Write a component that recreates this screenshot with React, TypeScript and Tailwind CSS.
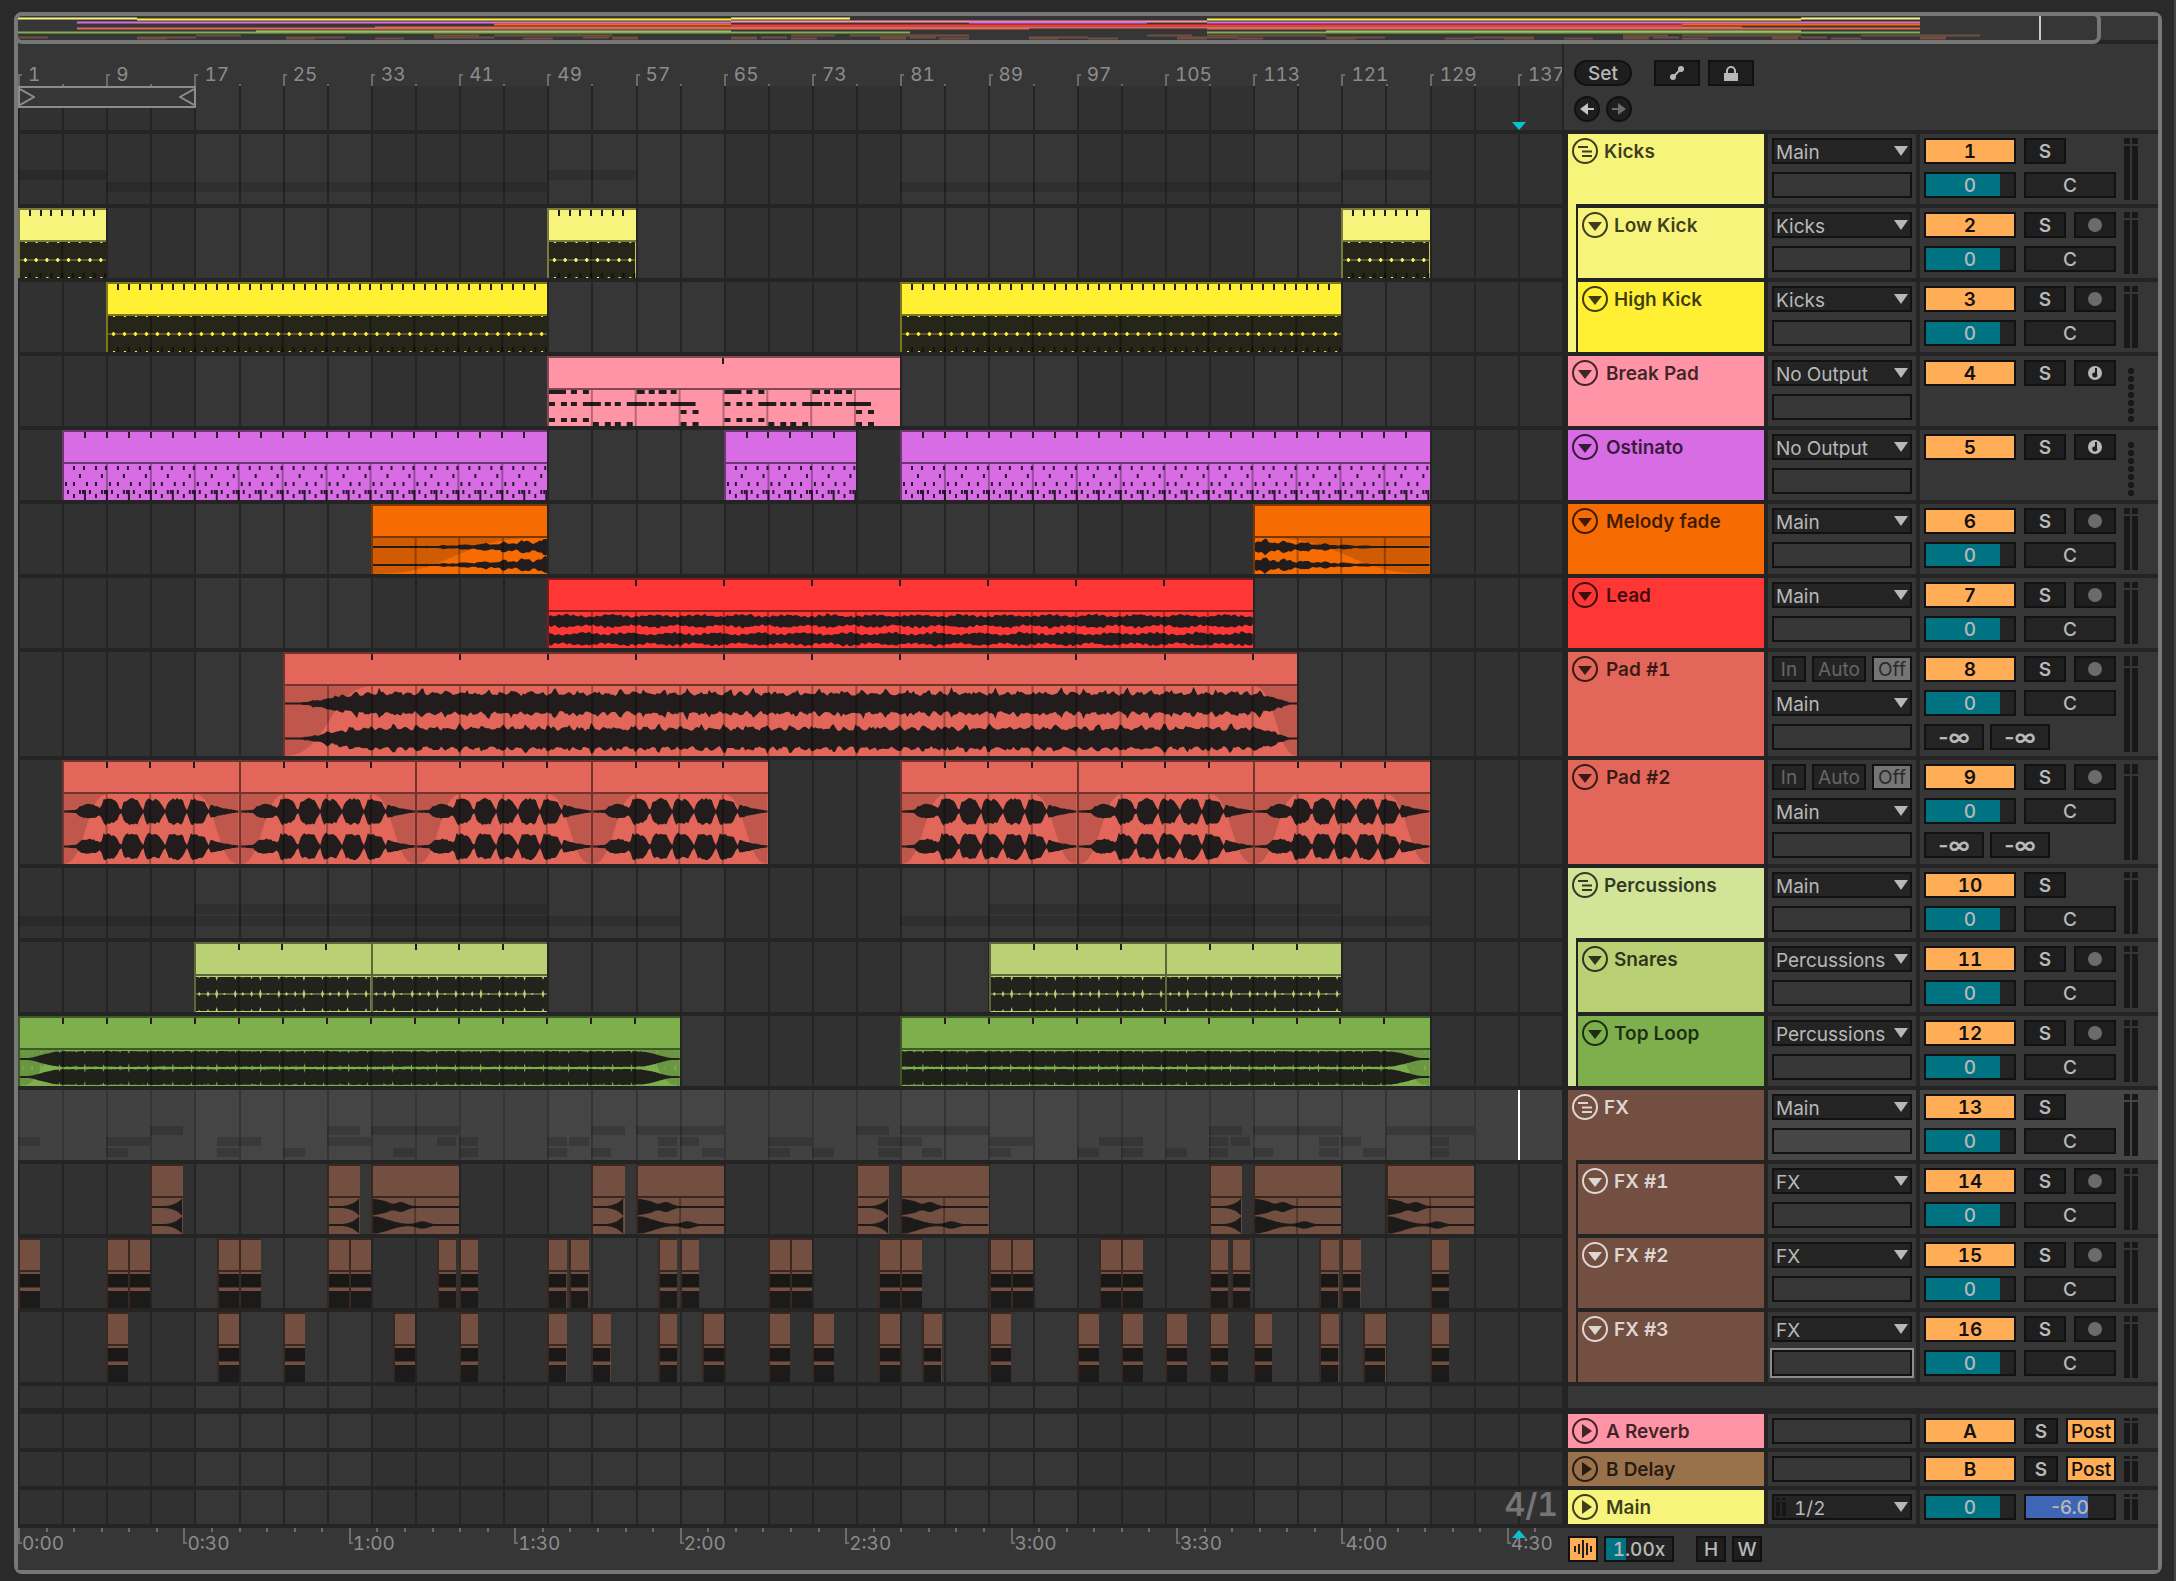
import type { ReactNode } from "react";
import { clsx } from "clsx";

const BARS = 140;
const OVERVIEW_BARS = 144;
const BAR = 11;
const PLAYHEAD = 136;

type WaveKind =
    | "kick" | "notes" | "pattern" | "melody" | "lead" | "pad"
    | "swell" | "snare" | "loop" | "riser" | "band";

type Clip = { start: number; len: number; fadeIn?: number; fadeOut?: number };

type Track = {
    name: string;
    num: string;
    color: string;
    output: string;
    type: "group" | "audio" | "midi";
    parent?: string;
    tall?: boolean;
    light?: boolean;
    selected?: boolean;
    focused?: boolean;
    wave?: WaveKind;
    tick?: number;
    clips?: Clip[];
};

const clip = (start: number, end: number, extra: Partial<Clip> = {}): Clip => ({ start, len: end - start, ...extra });
const shots = (long: number[], short: number[]) => [
    ...long.map((s) => clip(s, s + 2)),
    ...short.map((s) => clip(s, s + 1.75)),
];

const TRACKS: Track[] = [
    { name: "Kicks", num: "1", color: "#f7f47c", output: "Main", type: "group" },
    { name: "Low Kick", num: "2", color: "#f7f47c", output: "Kicks", type: "audio", parent: "Kicks", wave: "kick", tick: 1,
        clips: [clip(1, 9), clip(49, 57), clip(121, 129)] },
    { name: "High Kick", num: "3", color: "#fff034", output: "Kicks", type: "audio", parent: "Kicks", wave: "kick", tick: 1,
        clips: [clip(9, 49), clip(81, 121)] },
    { name: "Break Pad", num: "4", color: "#ff94a6", output: "No Output", type: "midi", wave: "notes", tick: 16,
        clips: [clip(49, 81)] },
    { name: "Ostinato", num: "5", color: "#d86ce4", output: "No Output", type: "midi", wave: "pattern", tick: 2,
        clips: [clip(5, 49), clip(65, 77), clip(81, 129)] },
    { name: "Melody fade", num: "6", color: "#f66c03", output: "Main", type: "audio", wave: "melody",
        clips: [clip(33, 49, { fadeIn: 15 }), clip(113, 129, { fadeOut: 15 })] },
    { name: "Lead", num: "7", color: "#ff3636", output: "Main", type: "audio", wave: "lead", tick: 8,
        clips: [clip(49, 113)] },
    { name: "Pad #1", num: "8", color: "#e2675a", output: "Main", type: "audio", tall: true, wave: "pad", tick: 8,
        clips: [clip(25, 117, { fadeIn: 8, fadeOut: 4 })] },
    { name: "Pad #2", num: "9", color: "#e2675a", output: "Main", type: "audio", tall: true, wave: "swell", tick: 4,
        clips: [5, 21, 37, 53, 81, 97, 113].map((s) => clip(s, s + 16, { fadeIn: 4, fadeOut: 4 })) },
    { name: "Percussions", num: "10", color: "#d2e498", output: "Main", type: "group" },
    { name: "Snares", num: "11", color: "#bad074", output: "Percussions", type: "audio", parent: "Percussions", wave: "snare", tick: 4,
        clips: [clip(17, 33), clip(33, 49), clip(89, 105), clip(105, 121)] },
    { name: "Top Loop", num: "12", color: "#7db04d", output: "Percussions", type: "audio", parent: "Percussions", wave: "loop", tick: 4,
        clips: [clip(1, 61, { fadeIn: 4, fadeOut: 4 }), clip(81, 129, { fadeOut: 4 })] },
    { name: "FX", num: "13", color: "#724f41", output: "Main", type: "group", light: true, selected: true },
    { name: "FX #1", num: "14", color: "#724f41", output: "FX", type: "audio", parent: "FX", light: true, wave: "riser",
        clips: [
            clip(13, 16), clip(29, 32), clip(33, 41), clip(53, 56), clip(57, 65),
            clip(77, 80), clip(81, 89), clip(109, 112), clip(113, 121), clip(125, 133),
        ] },
    { name: "FX #2", num: "15", color: "#724f41", output: "FX", type: "audio", parent: "FX", light: true, wave: "band",
        clips: shots([1, 9, 11, 19, 21, 29, 31, 69, 71, 79, 81, 89, 91, 99, 101], [39, 41, 49, 51, 59, 61, 109, 111, 119, 121, 129]) },
    { name: "FX #3", num: "16", color: "#724f41", output: "FX", type: "audio", parent: "FX", light: true, focused: true, wave: "band",
        clips: shots([9, 19, 25, 35, 63, 69, 73, 79, 89, 97, 101, 105, 123], [41, 49, 53, 59, 83, 109, 113, 119, 129]) },
];

const OVERVIEW_ROWS = [2, 3, 5, 6, 8, 9, 11, 12, 15, 16, 19, 21, 22];

const noise = (i: number, seed: number) => {
    const v = Math.sin(i * 12.9898 + seed * 78.233) * 43758.5453;
    return v - Math.floor(v);
};

// Closed outline of one audio channel, amp is given the position in bars
function channel(len: number, mid: number, amp: (b: number) => number, seed: number, jitter = 0.3) {
    const top: string[] = [];
    const bottom: string[] = [];
    for (let x = 0; x <= len * BAR; x += 2) {
        const a = amp(x / BAR);
        top.push(`${x} ${(mid - Math.max(1, a * (1 - jitter * noise(x, seed)))).toFixed(1)}`);
        bottom.unshift(`${x} ${(mid + Math.max(1, a * (1 - jitter * noise(x, seed + 3)))).toFixed(1)}`);
    }
    return `M${top.join("L")}L${bottom.join("L")}Z`;
}

function fadeGain(b: number, c: Clip) {
    let g = 1;
    if (c.fadeIn && b < c.fadeIn) g *= Math.sin((b / c.fadeIn) * Math.PI / 2) ** 1.8;
    const left = c.len - b;
    if (c.fadeOut && left < c.fadeOut) g *= Math.sin((Math.max(0, left) / c.fadeOut) * Math.PI / 2) ** 1.8;
    return g;
}

function amplitude(kind: WaveKind, c: Clip, ch: number): (b: number) => number {
    if (kind === "lead") {
        return (b) => 5.9 + 1.1 * Math.sin(((b + ch * 2.4) / 4) * Math.PI * 2 - 0.9) + 0.9 * Math.sin(b * 9);
    }
    if (kind === "melody") {
        return (b) => {
            const t = c.fadeIn ? b / c.len : 1 - b / c.len;
            return 0.4 + 8 * t ** 1.9 * (0.6 + 0.5 * Math.abs(Math.sin(b * 1.7)) ** 3 + 0.15 * Math.sin(b * 8));
        };
    }
    if (kind === "pad") {
        return (b) => (11 + 1.5 * Math.sin(b * 5.2 + ch) + 4.5 * Math.max(0, Math.sin(b * 3.14 + ch * 2)) ** 8) * fadeGain(b, c);
    }
    if (kind === "swell") {
        const notches = [0, 1.2, 3.35, 5.25, 7.3, 9.3, 11.35, 13.3, 16.5];
        return (b) => {
            const i = notches.findIndex((n, k) => b >= n && b < (notches[k + 1] ?? 99));
            const u = (b - notches[i]) / (notches[i + 1] - notches[i]);
            if (i === 0) return 1 + u;
            if (i === 1) return 2 + 6 * Math.sin(u * Math.PI) ** 0.5;
            if (i === 7) return 7 * (1 - u) ** 1.4 + 0.5;
            const attack = Math.min(1, 0.1 + u * 7);
            const shape = i % 2 === 0 ? 15 - 4 * u : 11 + 3 * Math.sin(u * Math.PI);
            return Math.max(1.5, shape * attack * Math.min(1, (1 - u) * 4));
        };
    }
    if (kind === "loop") return (b) => 8 * fadeGain(b, c);
    if (c.len <= 3) return (b) => 0.8 + 8 * (b / 2.9) ** 4;
    return (b) => {
        if (ch === 0) return b < 1 ? 8.5 - b * 2 : 0.8 + 5.5 * Math.exp(-((b - 1) ** 2) / 0.5) + 4.3 * Math.exp(-((b - 2.6) ** 2) / 0.5);
        return 0.8 + 8 * Math.exp(-((b / 1.9) ** 2)) + 3 * Math.exp(-((b - 4.6) ** 2) / 0.5);
    };
}

const range = (n: number) => Array.from({ length: Math.max(0, Math.ceil(n)) }, (_, i) => i);

const NOTES = [
    { y: 0, on: [[0, 17], [22, 28], [34, 40], [88, 96], [100, 106], [110, 118], [122, 128]] },
    { y: 12, on: [[0, 6], [12, 18], [22, 28], [34, 52], [56, 62], [66, 72], [78, 98], [100, 106], [110, 118], [122, 147]] },
    { y: 20, on: [[132, 138], [144, 150]] },
    { y: 28, on: [[0, 6], [12, 18], [22, 28], [34, 40]] },
    { y: 32, on: [[44, 50], [56, 62], [66, 72], [78, 84], [132, 138], [144, 150]] },
];

const PATTERN = [
    { y: 2, h: 4, at: [9, 19, 31, 41] },
    { y: 10, h: 4, at: [15, 37] },
    { y: 18, h: 4, at: [1, 9, 22, 31] },
    { y: 26, h: 4, at: [3, 15, 18, 25, 37, 40] },
    { y: 30, h: 4, at: [9, 31] },
    { y: 26, h: 10, at: [20, 42] },
];

const SPIKES = [[0.3, 2], [1.1, 3], [1.9, 5], [2.6, 1], [3.6, 4]];

function WaveShapes({ kind, c, color, height }: { kind: WaveKind; c: Clip; color: string; height: number }) {
    const w = c.len * BAR;
    const ink = "#231c1c";
    if (kind === "kick") {
        return (
            <>
                <rect width={w} height={height} fill="#252519" />
                <rect y={17.5} width={w} height={1} fill={color} opacity={0.5} />
                {range(c.len).map((i) => (
                    <g key={i} fill={color}>
                        <path d={`M${i * BAR + 3.5} 18l1.5-2h1l1.5 2l-1.5 2h-1z`} />
                        <rect x={i * BAR + 5} y={0} width={2} height={1} />
                        <rect x={i * BAR + 5} y={35} width={2} height={1} />
                        <rect x={i * BAR + 9} y={31} width={2} height={5} fill="#14140e" />
                    </g>
                ))}
            </>
        );
    }
    if (kind === "snare") {
        return (
            <>
                <rect y={1} width={w} height={height - 2} fill="#22231c" />
                <rect y={17} width={w} height={2} fill={color} opacity={0.4} />
                {range(c.len / 4).flatMap((p) => SPIKES.map(([b, h]) => {
                    const x = (p * 4 + b) * BAR;
                    return (
                        <g key={`${p}-${b}`} fill={color}>
                            <path d={`M${x - 1.5} 18l1.5 ${-h}l1.5 ${h}l-1.5 ${h}z`} />
                            <path d={`M${x - 1.5} 0h3l-1.5 ${h}z`} />
                            <path d={`M${x - 1.5} 36h3l-1.5 ${-h}z`} />
                        </g>
                    );
                }))}
            </>
        );
    }
    if (kind === "band") {
        return (
            <>
                <rect y={2} width={w} height={13} fill="#191817" />
                <rect y={15} width={w} height={1} fill="#4a342b" />
                <rect y={19} width={w} height={17} fill="#1d1b19" />
            </>
        );
    }
    if (kind === "notes") {
        return (
            <>
                {[0, 176].map((o) => NOTES.flatMap((r) => r.on.map(([a, b]) => (
                    <rect key={`${o}-${r.y}-${a}`} x={o + a} y={r.y} width={b - a} height={4} fill={ink} />
                ))))}
            </>
        );
    }
    if (kind === "pattern") {
        return (
            <>
                {range(c.len / 4).map((p) => PATTERN.flatMap((r) => r.at.map((x) => (
                    <rect key={`${p}-${r.y}-${r.h}-${x}`} x={p * 44 + x} y={r.y} width={2} height={r.h} fill="#241a28" />
                ))))}
            </>
        );
    }
    const fi = (c.fadeIn ?? 0) * BAR;
    const fo = (c.fadeOut ?? 0) * BAR;
    return (
        <>
            {fi > 0 && <path d={`M0 ${height}C${fi / 2} ${height} ${fi / 2} 0 ${fi} 0H0Z`} fill="black" opacity={0.15} />}
            {fo > 0 && <path d={`M${w} ${height}C${w - fo / 2} ${height} ${w - fo / 2} 0 ${w - fo} 0H${w}Z`} fill="black" opacity={0.15} />}
            {[0, 1].map((ch) => (
                <path
                    key={ch}
                    d={channel(c.len, height * (ch ? 0.75 : 0.25), amplitude(kind, c, ch), ch + c.len, kind === "loop" || kind === "riser" ? 0.05 : 0.22)}
                    fill={kind === "loop" ? "#20211a" : kind === "riser" ? "#1d1b19" : ink}
                />
            ))}
            {kind === "loop" && range(c.len / 4).flatMap((p) => SPIKES.map(([b, h]) => {
                const x = (p * 4 + b) * BAR;
                return (
                    <g key={`${p}-${b}`} fill={color}>
                        <path d={`M${x - 1} 18l1 ${-h}l1 ${h}l-1 ${h}z`} />
                        <path d={`M${x - 1} 36h2l-1 ${-h}z`} />
                        <path d={`M${x - 1} 1h2l-1 ${h / 2}z`} />
                    </g>
                );
            }))}
        </>
    );
}

function ClipBox({ c, track }: { c: Clip; track: Track }) {
    const height = track.tall ? 70 : 36;
    const w = c.len * BAR;
    const firstLine = (4 - ((c.start - 1) % 4)) % 4 || 4;
    return (
        <div
            className="absolute inset-y-0 flex flex-col overflow-hidden border-l-2 border-t-2 border-black/50"
            style={{
                left: `${((c.start - 1) / BARS) * 100}%`,
                width: `${(c.len / BARS) * 100}%`,
                backgroundColor: track.color,
            }}
        >
            <svg className="block h-[30px] w-full shrink-0" viewBox={`0 0 ${w} 30`} preserveAspectRatio="none" shapeRendering="crispEdges" aria-hidden="true">
                {track.tick && range(c.len / track.tick).slice(1).map((i) => (
                    <rect key={i} x={i * track.tick! * BAR - 2} width={2} height={6} fill="#241c1c" />
                ))}
            </svg>
            <div className="min-h-0 flex-1 border-t-2 border-black/50">
                <svg className="block h-full w-full" viewBox={`0 0 ${w} ${height}`} preserveAspectRatio="none" aria-hidden="true">
                    <WaveShapes kind={track.wave!} c={c} color={track.color} height={height} />
                    {range((c.len - firstLine) / 4).map((i) => (
                        <rect key={i} x={(firstLine + i * 4) * BAR - 2} width={2} height={height} fill="black" opacity={0.3} />
                    ))}
                </svg>
            </div>
        </div>
    );
}

function Grid() {
    return (
        <div className="absolute inset-0 flex">
            {range(BARS / 4).map((i) => (
                <div key={i} className={clsx("flex-1 border-l-2 border-[#242424]", Math.floor(i / 4) % 2 ? "bg-[#363636]" : "bg-[#313131]")} />
            ))}
        </div>
    );
}

function Lane({ children, selected }: { children?: ReactNode; selected?: boolean }) {
    return (
        <div className="relative min-w-0 flex-1 overflow-hidden">
            <Grid />
            {selected && <div className="absolute inset-0 bg-white/8" />}
            {children}
        </div>
    );
}

// Shaded summary of the clips inside a group
function GroupStrips({ name }: { name: string }) {
    const rows = TRACKS.filter((t) => t.parent === name);
    const step = rows.length > 2 ? 11 : 12;
    return (
        <svg className="absolute inset-0 h-full w-full" viewBox={`0 0 ${BARS} 70`} preserveAspectRatio="none" shapeRendering="crispEdges" aria-hidden="true">
            {rows.map((t, r) => t.clips!.map((c) => (
                <rect key={`${r}-${c.start}`} x={c.start - 1} y={36 + r * step} width={c.len} height={step - 2} fill="black" opacity={rows.length > 2 ? 0.16 : 0.13} />
            )))}
        </svg>
    );
}

function FoldIcon({ type }: { type: "group" | "open" | "closed" }) {
    return (
        <svg className="size-[26px] shrink-0" viewBox="0 0 26 26" aria-hidden="true">
            <circle cx="13" cy="13" r="12" fill="none" stroke="currentColor" strokeWidth="2" />
            {type === "group" && <path d="M6 9h10M10 13.5h10M10 18h10" stroke="currentColor" strokeWidth="2" />}
            {type === "open" && <path d="M6 10h14l-7 9z" fill="currentColor" />}
            {type === "closed" && <path d="M10 6l10 7l-10 7z" fill="currentColor" />}
        </svg>
    );
}

function TitleBar({ name, color, icon, light, child }: { name: string; color: string; icon: "group" | "open" | "closed"; light?: boolean; child?: boolean }) {
    return (
        <div className={clsx("min-w-0 flex-1 p-1", light ? "text-[#ded6d2]" : "text-black/75")} style={{ backgroundColor: color }}>
            <button type="button" className={clsx("flex h-[26px] items-center font-semibold", icon === "group" || child ? "gap-1.5" : "gap-2")}>
                <FoldIcon type={icon} />
                <span className="pt-0.5">{name}</span>
            </button>
        </div>
    );
}

const BOX = "h-[26px] border-2 border-[#111] flex items-center justify-center";
const TEXT_BOX = `${BOX} pt-0.5`;

function Chooser({ label, value, focused }: { label: string; value?: string; focused?: boolean }) {
    return (
        <div className="relative">
            <select
                aria-label={label}
                className={clsx(
                    "block h-[26px] w-full appearance-none border-2 border-[#111] pl-0.5 pt-0.5 outline-none",
                    value ? "bg-[#242424]" : "bg-transparent",
                    focused && "ring-2 ring-[#8c8c8c]",
                )}
            >
                <option>{value}</option>
            </select>
            {value && (
                <svg className="pointer-events-none absolute right-1 top-2 h-[10px] w-[14px]" viewBox="0 0 14 10" aria-hidden="true">
                    <path d="M0 0h14l-7 10z" fill="#b8b8b8" />
                </svg>
            )}
        </div>
    );
}

function Meter() {
    return (
        <div className="flex gap-0.5 self-stretch" aria-hidden="true">
            {[0, 1].map((i) => (
                <div key={i} className="flex w-1.5 flex-col gap-0.5">
                    <div className="h-[10%] bg-[#181818]" />
                    <div className="flex-1 bg-[#181818]" />
                </div>
            ))}
        </div>
    );
}

function MidiMeter() {
    return (
        <svg className="h-[62px] w-[14px]" viewBox="0 0 14 62" aria-hidden="true">
            {range(7).map((i) => (
                <circle key={i} cx="7" cy={11 + i * 8} r="3" fill="#181818" />
            ))}
        </svg>
    );
}

function RecordDot({ midi }: { midi: boolean }) {
    return (
        <svg className="size-[14px]" viewBox="0 0 14 14" aria-hidden="true">
            {midi ? (
                <>
                    <circle cx="7" cy="7" r="7" fill="#b8b8b8" />
                    <path d="M7 2h2v6a2.5 2.5 0 1 1-2-1.5z" fill="#1e1e1e" />
                </>
            ) : (
                <circle cx="7" cy="7" r="7" fill="#6b6b6b" />
            )}
        </svg>
    );
}

function TrackRow({ t }: { t: Track }) {
    const group = TRACKS.find((g) => g.name === t.parent);
    const panel = t.selected ? "bg-[#464646]" : "bg-[#363636]";
    return (
        <div className="flex">
            <Lane selected={t.selected}>
                {t.type === "group" && <GroupStrips name={t.name} />}
                {t.clips?.map((c) => <ClipBox key={c.start} c={c} track={t} />)}
                {t.selected && <div className="absolute inset-y-0 w-0.5 bg-white" style={{ left: `${(PLAYHEAD / BARS) * 100}%` }} />}
            </Lane>
            <div className="ml-1.5 flex w-[196px]">
                {group && <div className="-mt-1 mr-0.5 w-2 shrink-0" style={{ backgroundColor: group.color }} />}
                <TitleBar name={t.name} color={t.color} icon={t.type === "group" ? "group" : "open"} light={t.light} child={!!group} />
            </div>
            <div className={clsx("ml-1 flex w-[148px] flex-col gap-2 px-1 pb-1.5 pt-1", panel)}>
                {t.tall && (
                    <div className="flex justify-between text-[#666]">
                        <button type="button" className={clsx(TEXT_BOX, "w-[34px] bg-[#242424]")}>In</button>
                        <button type="button" className={clsx(TEXT_BOX, "w-[54px] bg-[#242424]")}>Auto</button>
                        <button type="button" className={clsx(TEXT_BOX, "w-10 bg-[#757575] text-[#2a2a2a]")}>Off</button>
                    </div>
                )}
                <Chooser label={`${t.name} output`} value={t.output} />
                <Chooser label={`${t.name} output channel`} focused={t.focused} />
            </div>
            <div className={clsx("ml-1 flex w-[238px] gap-2 px-1 py-1", panel)}>
                <div className="flex w-48 flex-col gap-2">
                    <div className="flex gap-2 font-semibold">
                        <button type="button" className={clsx(TEXT_BOX, "w-[92px] bg-[#ffad56] text-[#111]")}>{t.num}</button>
                        <button type="button" className={clsx(TEXT_BOX, "w-[42px] bg-[#1e1e1e]")}>S</button>
                        {t.type !== "group" && (
                            <button type="button" aria-label={`Arm ${t.name}`} className={clsx(BOX, "w-[42px] bg-[#1e1e1e]")}>
                                <RecordDot midi={t.type === "midi"} />
                            </button>
                        )}
                    </div>
                    {t.type !== "midi" && (
                        <div className="flex gap-2 font-medium">
                            <button type="button" className={clsx(TEXT_BOX, "w-[92px] bg-[linear-gradient(90deg,#007383_84%,#242424_84%)]")}>0</button>
                            <button type="button" className={clsx(TEXT_BOX, "w-[92px] bg-[#242424]")}>C</button>
                        </div>
                    )}
                    {t.tall && (
                        <div className="flex gap-1.5 text-[22px] font-semibold normal-nums">
                            <button type="button" className={clsx(BOX, "w-[60px] bg-[#242424]")}>-∞</button>
                            <button type="button" className={clsx(BOX, "w-[60px] bg-[#242424]")}>-∞</button>
                        </div>
                    )}
                </div>
                {t.type === "midi" ? <MidiMeter /> : <Meter />}
            </div>
        </div>
    );
}

function ReturnRow({ name, color, letter }: { name: string; color: string; letter?: string }) {
    return (
        <div className="flex h-[34px]">
            <Lane>
                {!letter && <span className="absolute right-1 top-0 text-[32px] font-semibold leading-[30px] text-[#757575]">4/1</span>}
            </Lane>
            <div className="ml-1.5 flex w-[196px]">
                <TitleBar name={name} color={color} icon="closed" />
            </div>
            <div className="ml-1 w-[148px] bg-[#363636] p-1">
                {letter ? <Chooser label={`${name} output`} /> : (
                    <div className="relative">
                        <select aria-label="Main output" className="block h-[26px] w-full appearance-none border-2 border-[#111] bg-[#242424] pl-5 pt-0.5">
                            <option>1/2</option>
                        </select>
                        <svg className="pointer-events-none absolute right-1 top-2 h-[10px] w-[14px]" viewBox="0 0 14 10" aria-hidden="true">
                            <path d="M0 0h14l-7 10z" fill="#b8b8b8" />
                        </svg>
                        <svg className="pointer-events-none absolute left-1 top-1 h-[18px] w-[10px]" viewBox="0 0 10 18" aria-hidden="true">
                            <path d="M0 0h4v2H0zM6 0h4v2H6zM0 4h4v14H0zM6 4h4v14H6z" fill="#161616" />
                        </svg>
                    </div>
                )}
            </div>
            <div className="ml-1 flex w-[238px] gap-2 bg-[#363636] p-1">
                <div className="flex w-48 gap-2">
                    {letter ? (
                        <>
                            <button type="button" className={clsx(TEXT_BOX, "w-[92px] bg-[#ffad56] font-semibold text-[#111]")}>{letter}</button>
                            <button type="button" className={clsx(TEXT_BOX, "w-[34px] bg-[#1e1e1e] font-semibold")}>S</button>
                            <button type="button" className={clsx(TEXT_BOX, "w-[50px] bg-[#ffad56] font-medium text-[#111]")}>Post</button>
                        </>
                    ) : (
                        <>
                            <button type="button" className={clsx(TEXT_BOX, "w-[92px] bg-[linear-gradient(90deg,#007383_84%,#242424_84%)] font-medium")}>0</button>
                            <button type="button" className={clsx(TEXT_BOX, "w-[92px] bg-[linear-gradient(90deg,#3f66b5_70%,#242424_70%)] font-medium normal-nums")}>-6.0</button>
                        </>
                    )}
                </div>
                <Meter />
            </div>
        </div>
    );
}

function Overview() {
    const rows = TRACKS.filter((t) => t.type !== "group");
    return (
        <div className="relative h-7 border-b-4 border-[#242424] bg-[#363636]">
            <svg className="block h-6 w-full" viewBox={`0 0 ${OVERVIEW_BARS} 24`} preserveAspectRatio="none" shapeRendering="crispEdges" aria-hidden="true">
                {rows.map((t, r) => t.clips!.map((c) => (
                    <g key={`${r}-${c.start}`} fill={t.color}>
                        <rect x={c.start - 1} y={OVERVIEW_ROWS[r] - 1} width={c.len} height={1} opacity={0.5} />
                        <rect x={c.start - 1} y={OVERVIEW_ROWS[r]} width={c.len} height={1} />
                        <rect x={c.start - 1} y={OVERVIEW_ROWS[r] + 1} width={c.len} height={1} opacity={0.5} />
                    </g>
                )))}
                <rect x={PLAYHEAD} width={0.15} height={24} fill="#c8c8c8" />
            </svg>
            <div className="absolute -left-1 -top-1 h-8 w-[97.5%] rounded-lg border-4 border-[#777]" />
        </div>
    );
}

function BeatRuler() {
    return (
        <div className="relative min-w-0 flex-1 overflow-hidden">
            <div className="relative h-[42px] bg-[#363636]">
                {range(BARS / 4).map((i) => (
                    <div key={i} className="absolute bottom-0" style={{ left: `${((i * 4) / BARS) * 100}%` }}>
                        {i % 2 ? (
                            <div className="size-0.5 bg-[#6b6b6b]" />
                        ) : (
                            <div className="flex">
                                <div className="mt-auto h-3 w-1 shrink-0 border-l-2 border-t-2 border-[#6b6b6b]" />
                                <span className="ml-1.5 text-[#8c8c8c]">{i * 4 + 1}</span>
                            </div>
                        )}
                    </div>
                ))}
            </div>
            <div className="relative h-11">
                <Grid />
                <div className="relative box-content h-[18px] border-2 border-[#8c8c8c] bg-[#363636]" style={{ width: `calc(${(16 / BARS) * 100}% - 2px)` }}>
                    <svg className="absolute left-0 top-0 h-[18px] w-[15px]" viewBox="0 0 15 18" fill="none" stroke="#8c8c8c" strokeWidth="2" aria-hidden="true">
                        <path d="M0 1l14 8l-14 8" />
                    </svg>
                    <svg className="absolute right-0 top-0 h-[18px] w-[15px]" viewBox="0 0 15 18" fill="none" stroke="#8c8c8c" strokeWidth="2" aria-hidden="true">
                        <path d="M15 1l-14 8l14 8" />
                    </svg>
                </div>
                <svg className="absolute bottom-0 -ml-1.5 h-2 w-[14px]" viewBox="0 0 14 8" style={{ left: `${(PLAYHEAD / BARS) * 100}%` }} aria-hidden="true">
                    <path d="M0 0h14l-7 8z" fill="#0ac0d4" />
                </svg>
            </div>
        </div>
    );
}

function TimeRuler() {
    return (
        <div className="relative h-[42px] min-w-0 flex-1 overflow-hidden bg-[#363636]">
            {range(56).map((i) => (
                <div key={i} className="absolute top-0" style={{ left: `${((i * 2.5) / BARS) * 100}%` }}>
                    {i % 6 ? (
                        <div className="h-1 w-0.5 bg-[#6b6b6b]" />
                    ) : (
                        <div className="flex">
                            <div className="h-4 w-1 shrink-0 border-b-2 border-l-2 border-[#6b6b6b]" />
                            <span className="pt-1.5 leading-5 text-[#8c8c8c]">{`${Math.floor(i / 12)}:${i % 12 ? "30" : "00"}`}</span>
                        </div>
                    )}
                </div>
            ))}
            <svg className="absolute top-0.5 -ml-1.5 h-2 w-[14px]" viewBox="0 0 14 8" style={{ left: `${(PLAYHEAD / BARS) * 100}%` }} aria-hidden="true">
                <path d="M0 8h14l-7-8z" fill="#0ac0d4" />
            </svg>
        </div>
    );
}

function Toolbar() {
    return (
        <div className="w-[596px] border-l-2 border-[#242424] bg-[#363636] pl-2.5 pt-4">
            <div className="flex">
                <button type="button" className={clsx(TEXT_BOX, "w-[58px] rounded-full bg-[#1e1e1e] font-medium")}>Set</button>
                <button type="button" aria-label="Automation mode" className={clsx(BOX, "ml-[22px] w-[46px] bg-[#1e1e1e]")}>
                    <svg className="size-4" viewBox="0 0 16 16" fill="#b8b8b8" aria-hidden="true">
                        <circle cx="12" cy="4" r="3" />
                        <circle cx="4" cy="12" r="3" />
                        <path d="M4 12l8-8" stroke="#b8b8b8" strokeWidth="2" />
                    </svg>
                </button>
                <button type="button" aria-label="Lock envelopes" className={clsx(BOX, "ml-2 w-[46px] bg-[#1e1e1e]")}>
                    <svg className="h-[15px] w-[14px]" viewBox="0 0 14 15" aria-hidden="true">
                        <path d="M0 7h14v8H0z" fill="#b8b8b8" />
                        <path d="M3 8V5a4 4 0 0 1 8 0v3" fill="none" stroke="#b8b8b8" strokeWidth="2" />
                    </svg>
                </button>
            </div>
            <div className="mt-2.5 flex gap-1.5">
                <button type="button" aria-label="Previous locator" className={clsx(BOX, "w-[26px] rounded-full bg-[#1e1e1e]")}>
                    <svg className="h-3 w-[14px]" viewBox="0 0 14 12" aria-hidden="true">
                        <path d="M0 6l8-6v5h6v2H8v5z" fill="#c4c4c4" />
                    </svg>
                </button>
                <button type="button" aria-label="Next locator" className={clsx(BOX, "w-[26px] rounded-full bg-[#1e1e1e]")}>
                    <svg className="h-3 w-[14px]" viewBox="0 0 14 12" aria-hidden="true">
                        <path d="M14 6l-8-6v5H0v2h6v5z" fill="#6b6b6b" />
                    </svg>
                </button>
            </div>
        </div>
    );
}

export default function App() {
    return (
        <div className="border-r-2 border-[#444] bg-[#2a2a2a] pb-[7px] pl-3.5 pr-3 pt-3 font-[Inter,sans-serif] text-[19px] leading-[22px] tabular-nums text-[#b8b8b8]">
            <main className="overflow-clip rounded-lg border-4 border-[#777] bg-[#242424] [overflow-clip-margin:4px]">
                <Overview />
                <div className="flex border-b-4 border-[#242424]">
                    <BeatRuler />
                    <Toolbar />
                </div>
                <div className="flex flex-col gap-1">
                    {TRACKS.map((t) => <TrackRow key={t.num} t={t} />)}
                    <div className="flex h-[22px]">
                        <Lane />
                        <div className="ml-1.5 w-[590px] bg-[#363636]" />
                    </div>
                </div>
                <div className="flex flex-col gap-1 pb-1 pt-1.5">
                    <ReturnRow name="A Reverb" color="#ff94a6" letter="A" />
                    <ReturnRow name="B Delay" color="#99724b" letter="B" />
                    <ReturnRow name="Main" color="#f7f47c" />
                </div>
                <div className="flex">
                    <TimeRuler />
                    <div className="flex w-[596px] gap-1.5 bg-[#363636] pl-1.5 pt-2 font-medium">
                        <button type="button" aria-label="Optimize height" className={clsx(BOX, "w-[30px] bg-[#ffad56]")}>
                            <svg className="h-[18px] w-5" viewBox="0 0 20 18" aria-hidden="true">
                                <path d="M2 6v6M6 4v10M10 0v18M14 3v12M18 6v6" stroke="#1e1e1e" strokeWidth="2" />
                            </svg>
                        </button>
                        <button type="button" className={clsx(TEXT_BOX, "w-[70px] bg-[linear-gradient(90deg,#007383_30%,#242424_30%)]")}>1.00x</button>
                        <button type="button" className={clsx(TEXT_BOX, "ml-4 w-[30px] bg-[#1e1e1e]")}>H</button>
                        <button type="button" className={clsx(TEXT_BOX, "w-[30px] bg-[#1e1e1e]")}>W</button>
                    </div>
                </div>
            </main>
        </div>
    );
}
